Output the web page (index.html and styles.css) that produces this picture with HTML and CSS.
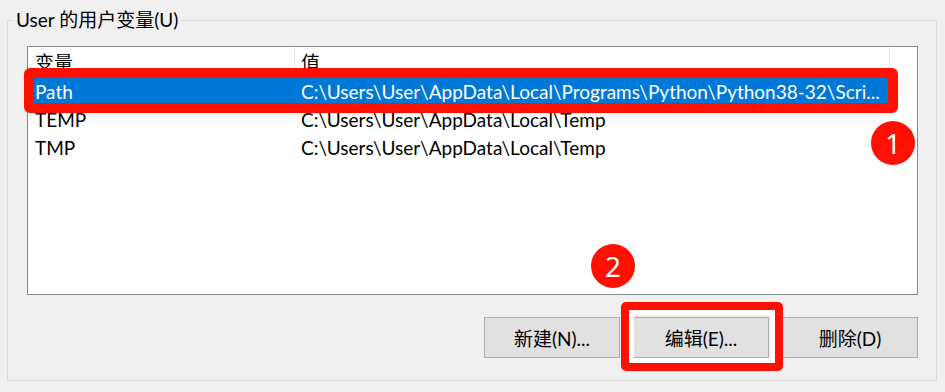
FILE: index.html
```html
<!DOCTYPE html>
<html lang="zh-CN">
<head>
<meta charset="utf-8">
<title>User 的用户变量</title>
<link rel="stylesheet" href="styles.css">
</head>
<body>
<fieldset class="group">
  <legend class="group-title">User 的用户变量(U)</legend>
  <div class="list">
    <div class="list-head">
      <div class="hcell col-name">变量</div>
      <div class="hcell col-value">值</div>
      <div class="hcell col-rest"></div>
    </div>
    <div class="row selected">
      <div class="cell col-name">Path</div>
      <div class="cell col-value">C:\Users\User\AppData\Local\Programs\Python\Python38-32\Scri...</div>
    </div>
    <div class="row">
      <div class="cell col-name">TEMP</div>
      <div class="cell col-value">C:\Users\User\AppData\Local\Temp</div>
    </div>
    <div class="row">
      <div class="cell col-name">TMP</div>
      <div class="cell col-value">C:\Users\User\AppData\Local\Temp</div>
    </div>
  </div>
  <div class="buttons">
    <button class="btn">新建(N)...</button>
    <button class="btn">编辑(E)...</button>
    <button class="btn">删除(D)</button>
  </div>
</fieldset>

<div class="mark mark-row"></div>
<div class="mark mark-btn"></div>
<div class="badge badge-1">1</div>
<div class="badge badge-2">2</div>
</body>
</html>
```

FILE: styles.css
```css
html, body {
  margin: 0;
  padding: 0;
}
body {
  width: 945px;
  height: 392px;
  background: #f0f0f0;
  font-family: Lato, "Noto Sans CJK SC", sans-serif;
  font-size: 19px;
  color: #000;
  position: relative;
  overflow: hidden;
}

.group {
  box-sizing: border-box;
  width: 930px;
  margin: 6px 0 0 7px;
  padding: 12px 18px 22px 19px;
  border: 1px solid #dcdcdc;
  min-width: 0;
}
.group-title {
  margin-left: -14px;
  padding: 0 3px;
  height: 28px;
  line-height: 28px;
  font-size: 19px;
}

.list {
  box-sizing: border-box;
  width: 891px;
  height: 249px;
  background: #fff;
  border: 1px solid #828790;
}
.list-head {
  display: grid;
  grid-template-columns: 267px 595px 1fr;
  height: 31px;
}
.hcell {
  box-sizing: border-box;
  line-height: 31px;
  padding-left: 7px;
  white-space: nowrap;
}
.hcell.col-name,
.hcell.col-value {
  border-right: 1px solid #e5e5e5;
}
.hcell.col-value {
  padding-left: 6px;
}

.row {
  display: grid;
  grid-template-columns: 267px 595px;
  height: 28px;
}
.cell {
  box-sizing: border-box;
  line-height: 28px;
  padding-left: 7px;
  white-space: nowrap;
  overflow: hidden;
}
.cell.col-value {
  padding-left: 6px;
}
.row.selected {
  width: 862px;
  background: #0078d7;
  color: #fff;
}

.buttons {
  display: flex;
  justify-content: flex-end;
  gap: 13px;
  width: 891px;
  margin-top: 22px;
}
.btn {
  box-sizing: border-box;
  width: 136px;
  height: 41px;
  background: #e1e1e1;
  border: 1px solid #adadad;
  font-family: Lato, "Noto Sans CJK SC", sans-serif;
  font-size: 19px;
  color: #000;
  padding: 0;
}

.mark {
  position: absolute;
  box-sizing: border-box;
  border-style: solid;
  border-color: #ff1000;
}
.mark-row {
  left: 24px;
  top: 68px;
  width: 874px;
  height: 45px;
  border-width: 10px;
  border-radius: 6px;
}
.mark-btn {
  left: 621px;
  top: 302px;
  width: 162px;
  height: 69px;
  border-width: 8px;
  border-radius: 5px;
  box-shadow: inset 0 0 0 5px #fff;
}

.badge {
  position: absolute;
  width: 44px;
  height: 44px;
  border-radius: 50%;
  background: #ff1000;
  color: #fff;
  font-family: "Noto Sans", sans-serif;
  font-size: 28px;
  line-height: 44px;
  text-align: center;
}
.badge-1 {
  left: 871px;
  top: 121px;
}
.badge-2 {
  left: 591px;
  top: 244px;
}
```
